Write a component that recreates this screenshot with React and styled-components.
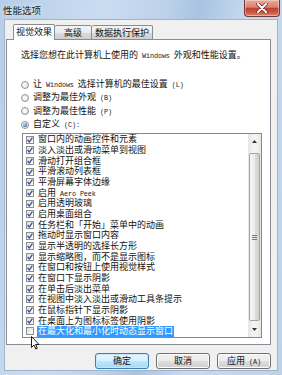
import React from "react";
import styled, { createGlobalStyle } from "styled-components";

const GlobalStyle = createGlobalStyle`
  html, body {
    margin: 0;
    padding: 0;
  }
  body {
    font-family: "Noto Sans CJK SC", sans-serif;
    color: #111;
  }
`;

const effects = [
  { label: "窗口内的动画控件和元素", checked: true },
  { label: "淡入淡出或滑动菜单到视图", checked: true },
  { label: "滑动打开组合框", checked: true },
  { label: "平滑滚动列表框", checked: true },
  { label: "平滑屏幕字体边缘", checked: true },
  { label: "启用 Aero Peek", checked: true },
  { label: "启用透明玻璃", checked: true },
  { label: "启用桌面组合", checked: true },
  { label: "任务栏和「开始」菜单中的动画", checked: true },
  { label: "拖动时显示窗口内容", checked: true },
  { label: "显示半透明的选择长方形", checked: true },
  { label: "显示缩略图，而不是显示图标", checked: true },
  { label: "在窗口和按钮上使用视觉样式", checked: true },
  { label: "在窗口下显示阴影", checked: true },
  { label: "在单击后淡出菜单", checked: true },
  { label: "在视图中淡入淡出或滑动工具条提示", checked: true },
  { label: "在鼠标指针下显示阴影", checked: true },
  { label: "在桌面上为图标标签使用阴影", checked: true },
  { label: "在最大化和最小化时动态显示窗口", checked: false, selected: true },
];

const radios = [
  { label: "让 Windows 选择计算机的最佳设置 (L)" },
  { label: "调整为最佳外观 (B)" },
  { label: "调整为最佳性能 (P)" },
  { label: "自定义 (C):", checked: true },
];

const Window = styled.div`
  position: relative;
  width: 282px;
  height: 375px;
  box-sizing: border-box;
  padding: 0 5px 5px 5px;
  display: flex;
  flex-direction: column;
  overflow: hidden;
  background: linear-gradient(
    100deg,
    #b7cee8 0%,
    #cadcf0 30%,
    #bcd1ea 48%,
    #a9c3e1 58%,
    #c8daef 72%,
    #bdd2ea 100%
  );
`;

const TitleBar = styled.div`
  height: 20px;
  display: flex;
  align-items: flex-start;
  justify-content: space-between;
`;

const Title = styled.span`
  font-size: 9.5px;
  line-height: 20px;
  color: #1b1b1b;
  margin-left: -2px;
  text-shadow: 0 0 4px rgba(255, 255, 255, 0.9);
`;

const CloseButton = styled.div`
  width: 36px;
  height: 17px;
  margin-right: -3px;
  box-sizing: border-box;
  border: 1px solid #6e3a34;
  border-top: none;
  border-radius: 0 0 4px 4px;
  display: flex;
  align-items: center;
  justify-content: center;
  background: linear-gradient(
    #e9a99a 0%,
    #dc8270 45%,
    #c2412e 52%,
    #cc5a43 80%,
    #e08b6f 100%
  );
  box-shadow: inset 0 0 0 1px rgba(255, 255, 255, 0.35);
`;

const Client = styled.div`
  flex: 1;
  display: flex;
  flex-direction: column;
  background: #f0f0f0;
  padding: 4px 6px 0 1px;
  box-shadow: 0 0 0 1px #9fb4cc;
`;

const TabStrip = styled.div`
  display: flex;
  align-items: flex-end;
  height: 16px;
  padding-left: 7px;
  margin-bottom: -1px;
  position: relative;
  z-index: 1;
`;

const Tab = styled.div`
  box-sizing: border-box;
  width: ${(p) => p.$w}px;
  height: ${(p) => (p.$active ? 16 : 15)}px;
  border: 1px solid #898c95;
  border-bottom: ${(p) => (p.$active ? "none" : "1px solid #898c95")};
  border-left: ${(p) => (p.$first || p.$active ? "1px solid #898c95" : "none")};
  border-radius: 2px 2px 0 0;
  background: ${(p) =>
    p.$active ? "#fff" : "linear-gradient(#f3f3f3, #ebebeb 50%, #dcdcdc 51%, #cfcfcf)"};
  font-size: 9px;
  line-height: 14px;
  text-align: center;
  color: #111;
`;

const Panel = styled.div`
  height: 306px;
  box-sizing: border-box;
  border: 1px solid #898c95;
  background: #fff;
  padding: 9px 8px 0 14px;
  display: flex;
  flex-direction: column;
`;

const Description = styled.div`
  font-size: 9px;
  line-height: 12px;
  white-space: nowrap;
`;

const Latin = styled.span`
  font-family: "Liberation Mono", monospace;
  font-size: 6.8px;
  letter-spacing: -0.1px;
  color: #222;
`;

const RadioGroup = styled.div`
  margin-top: 16px;
  display: flex;
  flex-direction: column;
`;

const RadioRow = styled.div`
  height: 13.33px;
  display: flex;
  align-items: center;
  gap: 4px;
  font-size: 9px;
  line-height: 12px;
  white-space: nowrap;
`;

const RadioDot = styled.span`
  width: 8px;
  height: 8px;
  box-sizing: border-box;
  border-radius: 50%;
  border: 1px solid #929292;
  background: radial-gradient(circle at 40% 40%, #ffffff, #dcdcdc);
  display: flex;
  align-items: center;
  justify-content: center;
  &::after {
    content: "";
    display: ${(p) => (p.$checked ? "block" : "none")};
    width: 4px;
    height: 4px;
    border-radius: 50%;
    background: radial-gradient(circle at 35% 35%, #b6dcfb, #2b6fc0 70%);
  }
`;

const ListBox = styled.div`
  margin: 2px 0 0 1px;
  width: 240px;
  height: 205px;
  box-sizing: border-box;
  border: 1px solid #828790;
  display: flex;
  overflow: hidden;
`;

const Items = styled.div`
  flex: 1;
  padding-left: 3px;
  display: flex;
  flex-direction: column;
`;

const Item = styled.div`
  height: 10.67px;
  flex: none;
  display: flex;
  align-items: center;
  gap: 3px;
  font-size: 9px;
  white-space: nowrap;
`;

const CheckBox = styled.span`
  width: 8px;
  height: 8px;
  flex: none;
  box-sizing: border-box;
  border: 1px solid #8f8f8f;
  background: linear-gradient(135deg, #dedede, #ffffff);
  display: flex;
  align-items: center;
  justify-content: center;
`;

const ItemLabel = styled.span`
  display: block;
  height: 10.5px;
  line-height: 10.5px;
  padding: 0 1px;
  background: ${(p) => (p.$selected ? "#3399ff" : "transparent")};
  color: ${(p) => (p.$selected ? "#fff" : "#111")};
`;

const ScrollBar = styled.div`
  width: 13px;
  flex: none;
  display: flex;
  flex-direction: column;
  background: linear-gradient(90deg, #e6e6e6, #f4f4f4 40%, #f4f4f4 60%, #e6e6e6);
`;

const Arrow = styled.div`
  height: 15px;
  flex: none;
  display: flex;
  align-items: center;
  justify-content: center;
`;

const Thumb = styled.div`
  margin: 4px 1px 0 1px;
  height: 168px;
  box-sizing: border-box;
  border: 1px solid #a3a3a3;
  border-radius: 2px;
  background: linear-gradient(90deg, #f6f6f6, #ececec 50%, #dcdcdc 51%, #d2d2d2);
  display: flex;
  align-items: center;
  justify-content: center;
`;

const Grip = styled.span`
  width: 5px;
  height: 5px;
  background: repeating-linear-gradient(#7a7a7a 0 1px, transparent 1px 2px);
`;

const Track = styled.div`
  flex: 1;
`;

const ButtonRow = styled.div`
  margin-top: 8px;
  display: flex;
  justify-content: flex-end;
  gap: 7px;
`;

const Button = styled.div`
  width: 54px;
  height: 16px;
  box-sizing: border-box;
  border: 1px solid ${(p) => (p.$default ? "#3c7fb1" : "#707070")};
  border-radius: 3px;
  background: ${(p) =>
    p.$default
      ? "linear-gradient(#eaf6fd, #d9f0fc 50%, #bee6fd 51%, #a7d9f5)"
      : "linear-gradient(#f2f2f2, #ebebeb 50%, #dddddd 51%, #cfcfcf)"};
  box-shadow: inset 0 0 0 1px ${(p) => (p.$default ? "#c6e6fb" : "#fcfcfc")};
  font-size: 9px;
  line-height: 14px;
  text-align: center;
  color: #111;
`;

const Cursor = styled.svg`
  position: absolute;
  left: 31px;
  top: 336px;
`;

// ASCII runs are drawn in the small bitmap-like latin face of the original
function Text({ children }) {
  return children.split(/([\x20-\x7e]+)/).map((part, i) =>
    /[\x21-\x7e]/.test(part) ? <Latin key={i}>{part}</Latin> : part
  );
}

function CloseGlyph() {
  return (
    <svg width="12" height="10" viewBox="0 0 12 10">
      <path d="M2 1 L10 9 M10 1 L2 9" stroke="#5a2a22" strokeWidth="3.4" strokeLinecap="round" />
      <path d="M2 1 L10 9 M10 1 L2 9" stroke="#ffffff" strokeWidth="2" strokeLinecap="round" />
    </svg>
  );
}

function Check() {
  return (
    <svg width="6" height="6" viewBox="0 0 6 6">
      <path d="M0.6 3 L2.3 5 L5.4 0.6" fill="none" stroke="#3a4f8d" strokeWidth="1.3" />
    </svg>
  );
}

function ArrowGlyph({ down }) {
  return (
    <svg width="5" height="3" viewBox="0 0 5 3">
      <path d={down ? "M0 0 H5 L2.5 3 Z" : "M0 3 H5 L2.5 0 Z"} fill="#333" />
    </svg>
  );
}

export default function App() {
  return (
    <>
      <GlobalStyle />
      <Window>
        <TitleBar>
          <Title>性能选项</Title>
          <CloseButton>
            <CloseGlyph />
          </CloseButton>
        </TitleBar>
        <Client>
          <TabStrip>
            <Tab $w={42} $active $first>视觉效果</Tab>
            <Tab $w={37}>高级</Tab>
            <Tab $w={61}>数据执行保护</Tab>
          </TabStrip>
          <Panel>
            <Description>
              <Text>选择您想在此计算机上使用的 Windows 外观和性能设置。</Text>
            </Description>
            <RadioGroup>
              {radios.map((r) => (
                <RadioRow key={r.label}>
                  <RadioDot $checked={r.checked} />
                  <span>
                    <Text>{r.label}</Text>
                  </span>
                </RadioRow>
              ))}
            </RadioGroup>
            <ListBox>
              <Items>
                {effects.map((e) => (
                  <Item key={e.label}>
                    <CheckBox>{e.checked && <Check />}</CheckBox>
                    <ItemLabel $selected={e.selected}>
                      <Text>{e.label}</Text>
                    </ItemLabel>
                  </Item>
                ))}
              </Items>
              <ScrollBar>
                <Arrow>
                  <ArrowGlyph />
                </Arrow>
                <Thumb>
                  <Grip />
                </Thumb>
                <Track />
                <Arrow>
                  <ArrowGlyph down />
                </Arrow>
              </ScrollBar>
            </ListBox>
          </Panel>
          <ButtonRow>
            <Button $default>确定</Button>
            <Button>取消</Button>
            <Button>
              <Text>应用 (A)</Text>
            </Button>
          </ButtonRow>
        </Client>
        <Cursor width="9" height="14" viewBox="0 0 9 14">
          <path d="M0.5 0.5 V11.5 L3 9 L4.8 13 L6.3 12.3 L4.6 8.5 H8 Z" fill="#fff" stroke="#000" strokeWidth="0.9" />
        </Cursor>
      </Window>
    </>
  );
}
